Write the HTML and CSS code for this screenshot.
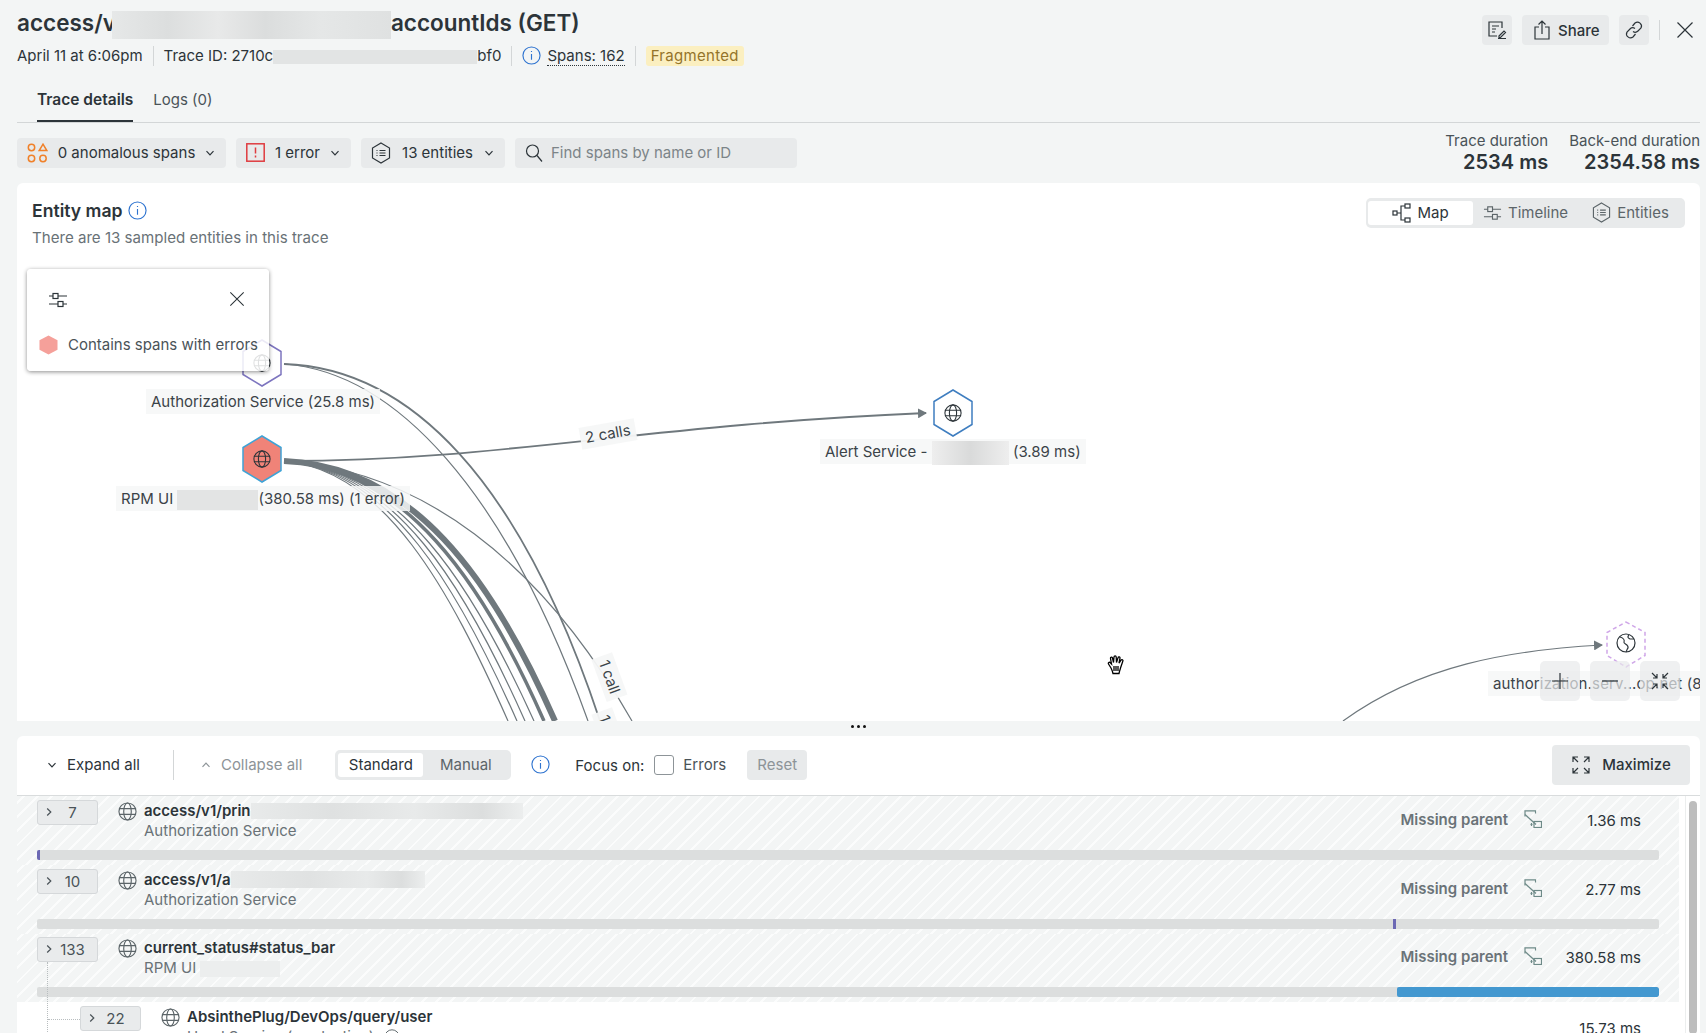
FILE: index.html
```html
<!DOCTYPE html>
<html lang="en">
<head>
<meta charset="UTF-8">
<meta name="viewport" content="width=device-width, initial-scale=1.0">
<link rel="stylesheet" href="styles.css">
<title>Trace details</title>
</head>
<body>
<svg class="defs" width="0" height="0">
  <defs>
    <symbol id="globe" viewBox="0 0 20 20"><circle cx="10" cy="10" r="9"/><ellipse cx="10" cy="10" rx="4" ry="9"/><path d="M1 7h18M1 13h18"/></symbol>
    <symbol id="chev-down" viewBox="0 0 10 10"><path d="M1.5 3.2L5 6.8l3.5-3.6"/></symbol>
    <symbol id="chev-up" viewBox="0 0 10 10"><path d="M1.5 6.8L5 3.2l3.5 3.6"/></symbol>
    <symbol id="chev-right" viewBox="0 0 10 10"><path d="M3.2 1.5L6.8 5 3.2 8.5"/></symbol>
    <symbol id="info" viewBox="0 0 20 20"><circle cx="10" cy="10" r="9"/><path d="M10 8.5v6M10 5.2v1.2"/></symbol>
    <symbol id="entities" viewBox="0 0 20 22"><path d="M10 1l8.5 5v10L10 21l-8.5-5V6z"/><path d="M8.5 8.5h6M8.5 11h6M8.5 13.5h6M5.5 8.5h1M5.5 11h1M5.5 13.5h1"/></symbol>
    <symbol id="sliders" viewBox="0 0 20 18"><path d="M1 5h4M10 5h9M1 13h9M15 13h4"/><rect x="5" y="2.5" width="5" height="5"/><rect x="10" y="10.5" width="5" height="5"/></symbol>
    <symbol id="close" viewBox="0 0 18 18"><path d="M1.5 1.5l15 15M16.5 1.5l-15 15"/></symbol>
    <symbol id="missing" viewBox="0 0 18 18"><path d="M1 6.500V.8h10.500v2.700"/><path d="M1 4.500l11 10"/><rect x="10" y="11.500" width="7.500" height="6"/><path d="M8.500 14.500H6.500M7.500 13v3"/></symbol>
  </defs>
</svg>

<div class="page">
  <header class="top">
    <div class="top-left">
      <h1 class="title">access/v<span class="smudge smudge-title"></span>accountIds (GET)</h1>
      <div class="meta">
        <span>April 11 at 6:06pm</span>
        <i class="sep"></i>
        <span class="trace-id">Trace ID: 2710c<span class="smudge smudge-id"></span>bf0</span>
        <i class="sep"></i>
        <svg class="ico ico-info"><use href="#info"/></svg>
        <span class="dotted">Spans: 162</span>
        <i class="sep"></i>
        <span class="badge">Fragmented</span>
      </div>
    </div>
    <div class="actions">
      <button class="btn square">
        <svg class="ico" width="20" height="20" viewBox="0 0 20 20"><path d="M15 8V2H2v14h8M5 6h7M5 9h4M5 12h3M11 18.500h8M12 16l5-5 1.500 1.500-5 5h-1.500z"/></svg>
      </button>
      <button class="btn share">
        <svg class="ico" width="16" height="20" viewBox="0 0 16 20"><path d="M5 7H1v12h14V7h-4M8 14V1M4.500 4.500L8 1l3.500 3.500"/></svg>
        Share
      </button>
      <button class="btn square">
        <svg class="ico" width="20" height="20" viewBox="0 0 20 20"><path d="M8.500 6l2.500-3a4 4 0 0 1 6 5l-3 3a4 4 0 0 1-5 .5M11.500 14L9 17a4 4 0 0 1-6-5l3-3a4 4 0 0 1 5-.5"/></svg>
      </button>
      <i class="sep sep-actions"></i>
      <svg class="ico ico-x"><use href="#close"/></svg>
    </div>
  </header>

  <nav class="tabs">
    <a class="tab active">Trace details</a>
    <a class="tab">Logs (0)</a>
  </nav>

  <div class="filters">
    <button class="btn filter f-anom">
      <svg class="ico-orange" width="21" height="20" viewBox="0 0 21 20"><circle cx="4.500" cy="4.500" r="3.200"/><path d="M16 1.200l3.800 6.300h-7.600z"/><circle cx="4.500" cy="15.500" r="3.200"/><circle cx="16" cy="15.500" r="3.200"/></svg>
      <span>0 anomalous spans</span>
      <svg class="chev"><use href="#chev-down"/></svg>
    </button>
    <button class="btn filter f-err">
      <svg class="ico-red" width="19" height="19" viewBox="0 0 19 19"><rect x="0.800" y="0.800" width="17.400" height="17.400"/><path d="M9.500 4.500v6M9.500 12.500v2"/></svg>
      <span>1 error</span>
      <svg class="chev"><use href="#chev-down"/></svg>
    </button>
    <button class="btn filter f-ent">
      <svg class="ico" width="20" height="22"><use href="#entities"/></svg>
      <span>13 entities</span>
      <svg class="chev"><use href="#chev-down"/></svg>
    </button>
    <div class="search">
      <svg class="ico" width="18" height="20" viewBox="0 0 18 20"><circle cx="7.500" cy="8" r="6"/><path d="M12 12.500l5 6"/></svg>
      <span>Find spans by name or ID</span>
    </div>
    <div class="stats">
      <div class="stat"><span>Trace duration</span><b>2534 ms</b></div>
      <div class="stat"><span>Back-end duration</span><b>2354.58 ms</b></div>
    </div>
  </div>

  <section class="map">
    <div class="map-head">
      <div>
        <h2 class="map-title">Entity map <svg class="ico ico-info"><use href="#info"/></svg></h2>
        <p class="map-sub">There are 13 sampled entities in this trace</p>
      </div>
      <div class="seg seg-map">
        <button class="seg-btn on">
          <svg class="ico" width="19" height="20" viewBox="0 0 19 20"><rect x="1" y="8" width="4" height="4"/><path d="M5 10h4M13 3H9v14h4"/><rect x="13" y="1" width="5" height="4"/><rect x="13" y="15" width="5" height="4"/></svg>
          Map
        </button>
        <button class="seg-btn">
          <svg class="ico" width="19" height="18"><use href="#sliders"/></svg>
          Timeline
        </button>
        <button class="seg-btn">
          <svg class="ico" width="19" height="21"><use href="#entities"/></svg>
          Entities
        </button>
      </div>
    </div>

    <svg class="edges" viewBox="17 183 1683 538" width="1683" height="538">
      <defs>
        <marker id="arrow" markerWidth="9" markerHeight="10" refX="8" refY="5" orient="auto" markerUnits="userSpaceOnUse"><path d="M0 0l9 5-9 5z" fill="#6f787d"/></marker>
      </defs>
      <g class="edge-lines">
        <path class="w2" d="M284 364C410 368 520 480 600 721"/>
        <path class="w1" d="M284 364C395 372 505 490 588 721"/>
        <path class="w2" d="M284 461C500 461 640 425 926 413" marker-end="url(#arrow)"/>
        <path class="w1" d="M284 461C420 470 540 560 632 721"/>
        <path class="w1" d="M284 461C385 470 450 590 508 721"/>
        <path class="w1" d="M284 461C390 470 458 588 517 721"/>
        <path class="w1" d="M284 461C395 470 465 586 525 721"/>
        <path class="w1" d="M284 461C400 470 472 584 534 721"/>
        <path class="w4" d="M284 461C404 468 482 580 544 721"/>
        <path class="w6" d="M284 461C412 466 492 578 555 721"/>
        <path class="w1" d="M1343 721C1420 665 1510 650 1602 645" marker-end="url(#arrow)"/>
      </g>
      <g class="node node-auth" transform="translate(262 363)">
        <path d="M0-23L19-11.500V11.500L0 23-19 11.500V-11.500z"/>
        <use href="#globe" x="-9" y="-9" width="18" height="18"/>
      </g>
      <g class="node node-err" transform="translate(262 459)">
        <path d="M0-23L19-11.500V11.500L0 23-19 11.500V-11.500z"/>
        <use href="#globe" x="-9" y="-9" width="18" height="18"/>
      </g>
      <g class="node node-alert" transform="translate(953 413)">
        <path d="M0-23L19-11.500V11.500L0 23-19 11.500V-11.500z"/>
        <use href="#globe" x="-9" y="-9" width="18" height="18"/>
      </g>
      <g class="node node-ext" transform="translate(1626 643)">
        <path d="M0-21L19-10.500V12.500L0 24-19 12.500V-10.500z"/>
        <circle r="9"/>
        <path d="M-6-6c3 1 5 2 4 5-1 2 5 2 4 6-1 1-1 2-2 4M3-8c-2 2-1 3 1 4l4 0"/>
      </g>
    </svg>

    <div class="label label-auth">Authorization Service (25.8 ms)</div>
    <div class="label label-rpm">RPM UI <span class="smudge smudge-rpm"></span>(380.58 ms) (1 error)</div>
    <div class="label label-alert">Alert Service - <span class="smudge smudge-alert"></span> (3.89 ms)</div>
    <div class="label label-ext">authorization.serv...op.net (8</div>
    <div class="edge-tag tag-two">2 calls</div>
    <div class="edge-tag tag-one">1 call</div>
    <div class="edge-tag tag-cut">1 call</div>

    <div class="legend">
      <div class="legend-top">
        <svg class="ico" width="20" height="18"><use href="#sliders"/></svg>
        <svg class="ico" width="16" height="16"><use href="#close"/></svg>
      </div>
      <div class="legend-row">
        <svg width="20" height="20" viewBox="0 0 20 20"><path class="hex-err" d="M10 0l9.500 5v10L10 20 .5 15V5z"/></svg>
        Contains spans with errors
      </div>
    </div>

    <div class="zoom-btns">
      <button class="zoom-btn"><svg class="ico" width="18" height="18" viewBox="0 0 18 18"><path d="M9 1v16M1 9h16"/></svg></button>
      <button class="zoom-btn"><svg class="ico" width="18" height="18" viewBox="0 0 18 18"><path d="M1 9h16"/></svg></button>
      <button class="zoom-btn"><svg class="ico" width="20" height="20" viewBox="0 0 20 20"><path d="M2 2l5 5M7 3v4H3M18 2l-5 5M13 3v4h4M2 18l5-5M7 17v-4H3M18 18l-5-5M13 17v-4h4"/></svg></button>
    </div>

    <svg class="hand" width="18" height="20" viewBox="0 0 18 20"><path d="M4 13L1.500 9c-.8-1.300.8-2.300 1.800-1.300L4.500 9 3.500 3.500c-.3-1.500 1.700-2 2-.5L6.500 7.500 7 2c.1-1.500 2.100-1.500 2.200 0l.3 5.500L11 2.800c.4-1.400 2.300-1 2 .4l-1 5 2-3c.9-1.200 2.500-.2 1.800 1.100L13.500 13c-.5 2-1 3-1.500 5.500H6C5.600 16.500 5 15 4 13z"/><path d="M7 11v5M9 11v5M11 11v5"/></svg>
  </section>

  <div class="splitter"><i></i><i></i><i></i></div>

  <section class="spans">
    <div class="spans-bar">
      <button class="plain"><svg class="chev"><use href="#chev-down"/></svg>Expand all</button>
      <i class="sep sep-tall"></i>
      <button class="plain dim"><svg class="chev"><use href="#chev-up"/></svg>Collapse all</button>
      <div class="seg seg-mode">
        <button class="seg-btn on">Standard</button>
        <button class="seg-btn">Manual</button>
      </div>
      <svg class="ico ico-info"><use href="#info"/></svg>
      <span class="focus">Focus on:</span>
      <span class="check"></span>
      <span class="errors">Errors</span>
      <button class="reset">Reset</button>
      <button class="maximize">
        <svg class="ico" width="20" height="20" viewBox="0 0 20 20"><path d="M2 2l5 5M2 7V2h5M18 2l-5 5M13 2h5v5M2 18l5-5M2 13v5h5M18 18l-5-5M18 13v5h-5"/></svg>
        Maximize
      </button>
    </div>

    <div class="spans-body">
      <div class="rows">
        <div class="row hatched">
          <div class="row-top">
            <span class="count"><svg class="chev"><use href="#chev-right"/></svg><span class="num">7</span></span>
            <svg class="row-globe"><use href="#globe"/></svg>
            <div class="names">
              <div class="name">access/v1/prin<span class="smudge smudge-r1"></span></div>
              <div class="svc">Authorization Service</div>
            </div>
            <span class="missing">Missing parent</span>
            <svg class="missing-ico"><use href="#missing"/></svg>
            <span class="dur">1.36 ms</span>
          </div>
          <div class="bar"><span class="fill mark"></span></div>
        </div>

        <div class="row hatched">
          <div class="row-top">
            <span class="count"><svg class="chev"><use href="#chev-right"/></svg><span class="num">10</span></span>
            <svg class="row-globe"><use href="#globe"/></svg>
            <div class="names">
              <div class="name">access/v1/a<span class="smudge smudge-r2"></span></div>
              <div class="svc">Authorization Service</div>
            </div>
            <span class="missing">Missing parent</span>
            <svg class="missing-ico"><use href="#missing"/></svg>
            <span class="dur">2.77 ms</span>
          </div>
          <div class="bar"><span class="fill mark mark-mid"></span></div>
        </div>

        <div class="row hatched tight">
          <div class="row-top">
            <span class="count"><svg class="chev"><use href="#chev-right"/></svg><span class="num">133</span></span>
            <svg class="row-globe"><use href="#globe"/></svg>
            <div class="names">
              <div class="name">current_status#status_bar</div>
              <div class="svc">RPM UI <span class="smudge smudge-r3"></span></div>
            </div>
            <span class="missing">Missing parent</span>
            <svg class="missing-ico"><use href="#missing"/></svg>
            <span class="dur">380.58 ms</span>
          </div>
          <div class="bar"><span class="fill blue"></span></div>
        </div>

        <div class="row child">
          <div class="row-top">
            <span class="count"><svg class="chev"><use href="#chev-right"/></svg><span class="num">22</span></span>
            <svg class="row-globe"><use href="#globe"/></svg>
            <div class="names">
              <div class="name">AbsinthePlug/DevOps/query/user</div>
              <div class="svc">Head Service (production) <svg class="ico ico-tiny"><use href="#info"/></svg></div>
            </div>
            <span class="dur dur-alone">15.73 ms</span>
          </div>
        </div>
      </div>
      <div class="scroll"><div class="thumb"></div></div>
    </div>
  </section>
</div>
</body>
</html>
```

FILE: styles.css
```css
* {
  box-sizing: border-box;
}
html, body {
  margin: 0;
  height: 100%;
  overflow: hidden;
}
body {
  font-family: Inter, "Noto Sans", sans-serif;
  font-size: 15px;
  color: #2c3439;
  background-color: #f3f5f5;
}
button {
  font: inherit;
  color: inherit;
  border: none;
  background: none;
  padding: 0;
}
.defs {
  position: absolute;
}
.page {
  display: flex;
  flex-direction: column;
  height: 1033px;
  padding: 0 6px 0 17px;
}

/* icons */
.ico, .chev, .row-globe, .missing-ico {
  fill: none;
  stroke: currentColor;
  stroke-width: 1.2;
  flex: none;
}
.chev {
  width: 10px;
  height: 10px;
}
.ico-info {
  width: 19px;
  height: 19px;
  color: #2f74d0;
}
.ico-x {
  width: 18px;
  height: 18px;
  color: #2c3439;
}
.ico-orange {
  fill: none;
  stroke: #f0812a;
  stroke-width: 1.5;
  flex: none;
}
.ico-red {
  fill: none;
  stroke: #df3b3f;
  stroke-width: 1.5;
  flex: none;
}
.ico-tiny {
  width: 16px;
  height: 16px;
  color: #5c6569;
  vertical-align: -3px;
  margin-left: 6px;
}

/* blurred out values */
.smudge {
  display: inline-block;
  vertical-align: middle;
  background: linear-gradient(90deg, #e6e8e8, #dcdede 20%, #e8e9e9 38%, #dbdddd 55%, #e5e7e7 75%, #dfe1e1);
}
.smudge-title { width: 279px; height: 28px; margin-left: -4px; }
.smudge-id { width: 204px; height: 14px; background: #e2e4e4; }
.smudge-rpm { width: 81px; height: 20px; background: #e3e4e4; }
.smudge-alert { width: 77px; height: 24px; background: linear-gradient(90deg, #eeeeee, #d9dada 50%, #eeeeee); }
.smudge-r1 { width: 272px; height: 16px; background: linear-gradient(90deg, #e8eaea, #dfe1e1 30%, #e8eaea 60%, #dcdede 85%, #eceeee); }
.smudge-r2 { width: 194px; height: 17px; background: linear-gradient(90deg, #e8eaea, #e0e2e2 40%, #e8eaea 70%, #dcdede 88%, #eceeee); }
.smudge-r3 { width: 80px; height: 16px; background: #eceeee; }

/* header */
.top {
  display: flex;
  justify-content: space-between;
  padding-top: 9px;
}
.title {
  margin: 0;
  font-size: 22.5px;
  line-height: 28px;
  font-weight: 600;
}
.meta {
  display: flex;
  align-items: center;
  height: 28px;
  margin-top: 3px;
}
.sep {
  display: block;
  width: 1px;
  height: 20px;
  margin: 0 10px;
  background-color: #d3d6d7;
}
.trace-id {
  white-space: nowrap;
}
.dotted {
  margin-left: 6px;
  border-bottom: 1px dotted #2c3439;
}
.badge {
  padding: 0 5px;
  line-height: 20px;
  letter-spacing: 0.3px;
  color: #94742a;
  background-color: #fbefc0;
  border-radius: 3px;
}
.actions {
  display: flex;
  align-items: center;
  gap: 10px;
  height: 30px;
  margin: 6px 6px 0 0;
}
.btn {
  display: flex;
  align-items: center;
  background-color: #e8eaeb;
  border-radius: 4px;
}
.square {
  justify-content: center;
  width: 30px;
  height: 30px;
}
.share {
  gap: 8px;
  width: 87px;
  height: 30px;
  padding-left: 12px;
  font-weight: 500;
}
.sep-actions {
  margin: 0 6px 0 0;
}

/* tabs */
.tabs {
  display: flex;
  gap: 20px;
  height: 38px;
  margin-top: 15px;
  padding-left: 20px;
  border-bottom: 1px solid #d3d6d7;
}
.tab {
  line-height: 30px;
  height: 37px;
  color: #4a5358;
}
.tab.active {
  font-size: 15.5px;
  font-weight: 600;
  color: #2c3439;
  border-bottom: 2px solid #2c3439;
}

/* filters */
.filters {
  display: flex;
  align-items: flex-start;
  gap: 10px;
  height: 45px;
  margin-top: 15px;
}
.filter {
  justify-content: space-between;
  height: 30px;
  padding: 0 11px 0 10px;
  line-height: 28px;
}
.f-anom { width: 209px; }
.f-err { width: 115px; }
.f-ent { width: 144px; }
.search {
  display: flex;
  align-items: center;
  gap: 8px;
  width: 282px;
  height: 30px;
  padding-left: 10px;
  color: #7c8488;
  background-color: #e8eaeb;
  border-radius: 4px;
}
.search .ico {
  color: #2c3439;
}
.stats {
  display: flex;
  gap: 21px;
  margin: -7px 0 0 auto;
  text-align: right;
}
.stat {
  display: flex;
  flex-direction: column;
  color: #4a5358;
  line-height: 19px;
}
.stat b {
  font-size: 20px;
  line-height: 24px;
  font-weight: 600;
  color: #2c3439;
}

/* entity map */
.map {
  position: relative;
  flex: none;
  height: 538px;
  background-color: #fff;
  border-radius: 6px 6px 0 0;
  overflow: hidden;
}
.map-head {
  position: relative;
  z-index: 2;
  display: flex;
  justify-content: space-between;
  padding: 15px 15px 0;
}
.map-title {
  display: flex;
  align-items: center;
  gap: 5px;
  margin: 0;
  font-size: 17.6px;
  line-height: 26px;
  font-weight: 600;
}
.map-sub {
  margin: 3px 0 0;
  line-height: 22px;
  font-size: 15.1px;
  color: #697277;
}
.seg {
  display: grid;
  padding: 3px;
  background-color: #e8eaeb;
  border-radius: 5px;
}
.seg-map {
  grid-template-columns: repeat(3, 105px);
  padding: 3px 2px;
  height: 30px;
}
.seg-btn {
  display: flex;
  align-items: center;
  justify-content: center;
  gap: 6px;
  color: #5c6569;
  border-radius: 3px;
}
.seg-btn.on {
  color: #2c3439;
  background-color: #fff;
}
.edges {
  position: absolute;
  left: 0;
  top: 0;
}
.edge-lines path {
  fill: none;
  stroke: #6f787d;
}
.edge-lines .w1 { stroke-width: 1.2; }
.edge-lines .w2 { stroke-width: 1.8; }
.edge-lines .w4 { stroke-width: 3.5; }
.edge-lines .w6 { stroke-width: 6; }
.node {
  fill: #fff;
  stroke-width: 1.500;
}
.node > :not(:first-child) {
  fill: none;
  stroke: #2c3439;
  stroke-width: 1.200;
}
.node-auth > path { stroke: #7d75bf; }
.node-err > path { stroke: #3fa3d6; fill: #f08378; }
.node-alert > path { stroke: #3f7ec0; }
.node-ext > path:first-child { stroke: #cfa6e8; stroke-dasharray: 4 3; }
.label {
  position: absolute;
  z-index: 1;
  height: 25px;
  padding: 0 5px;
  line-height: 25px;
  white-space: nowrap;
  color: #3b4348;
  background-color: rgba(246, 247, 247, 0.85);
}
.label-auth { left: 129px; top: 206px; }
.label-rpm { left: 99px; top: 303px; }
.label-alert { left: 803px; top: 256px; }
.label-ext { left: 1471px; top: 488px; letter-spacing: 0.15px; }
.edge-tag {
  position: absolute;
  z-index: 1;
  padding: 0 5px;
  line-height: 22px;
  color: #3b4348;
  background-color: rgba(246, 247, 247, 0.95);
}
.tag-two { left: 563px; top: 240px; transform: rotate(-10deg); }
.tag-one { left: 570px; top: 483px; transform: rotate(70deg); }
.tag-cut { left: 570px; top: 538px; transform: rotate(70deg); }
.legend {
  position: absolute;
  z-index: 2;
  left: 10px;
  top: 86px;
  width: 242px;
  height: 102px;
  padding: 22px 11px 0 12px;
  background-color: rgba(255, 255, 255, 0.85);
  border-radius: 4px;
  box-shadow: 0 1px 4px rgba(0, 0, 0, 0.45);
}
.legend-top {
  display: flex;
  justify-content: space-between;
  padding: 0 13px 0 9px;
}
.legend-row {
  display: flex;
  align-items: center;
  gap: 10px;
  margin-top: 26px;
  white-space: nowrap;
  color: #4a5358;
}
.hex-err {
  fill: #f5a09a;
}
.zoom-btns {
  position: absolute;
  z-index: 2;
  right: 20px;
  top: 478px;
  display: flex;
  gap: 10px;
}
.zoom-btn {
  display: flex;
  align-items: center;
  justify-content: center;
  width: 40px;
  height: 40px;
  border-radius: 5px;
  background-color: rgba(232, 234, 235, 0.7);
}
.hand {
  position: absolute;
  left: 1090px;
  top: 472px;
  fill: #fff;
  stroke: #000;
  stroke-width: 1.300;
}

/* splitter */
.splitter {
  display: flex;
  align-items: flex-start;
  justify-content: center;
  gap: 3px;
  flex: none;
  height: 15px;
  padding-top: 4px;
}
.splitter i {
  width: 3px;
  height: 3px;
  border-radius: 50%;
  background-color: #111;
}

/* spans table */
.spans {
  flex: 1;
  min-height: 0;
  background-color: #fff;
  border-radius: 6px 6px 0 0;
  overflow: hidden;
}
.spans-bar {
  display: flex;
  align-items: center;
  height: 60px;
  padding: 0 10px 1px 30px;
  border-bottom: 1px solid #d9dcdd;
}
.plain {
  display: flex;
  align-items: center;
  gap: 10px;
}
.dim {
  color: #8d9498;
}
.sep-tall {
  height: 30px;
  margin: 0 27px 0 33px;
}
.seg-mode {
  grid-template-columns: 85px 85px;
  height: 30px;
  margin-left: 33px;
  margin-right: 20px;
}
.focus {
  margin-left: 25px;
  margin-top: 2px;
}
.check {
  width: 20px;
  height: 20px;
  margin: 0 9px 0 10px;
  background-color: #fff;
  border: 1px solid #8d9498;
  border-radius: 3px;
}
.errors {
  color: #4a5358;
}
.reset {
  width: 60px;
  height: 30px;
  margin-left: 21px;
  color: #8d9498;
  background-color: #e8eaeb;
  border-radius: 4px;
}
.maximize {
  display: flex;
  align-items: center;
  justify-content: center;
  gap: 11px;
  width: 138px;
  height: 40px;
  margin-left: auto;
  font-weight: 500;
  background-color: #e8eaeb;
  border-radius: 4px;
}
.spans-body {
  display: flex;
  height: 238px;
}
.rows {
  width: 1663px;
}
.row {
  position: relative;
  padding: 4px 20px 0;
  height: 69px;
}
.row.tight {
  padding-top: 3px;
  height: 68px;
}
.hatched {
  background-color: #f3f5f5;
  background-image: repeating-linear-gradient(-45deg, transparent 0 8px, #fbfcfc 8px 10px);
}
.row-top {
  display: flex;
  height: 50px;
  padding-right: 18px;
}
.count {
  display: flex;
  align-items: center;
  flex: none;
  width: 61px;
  height: 25px;
  padding: 0 6px;
  color: #4a5358;
  background-color: #e9ebec;
  border: 1px solid #d5d8da;
  border-radius: 3px;
}
.num {
  flex: 1;
  text-align: center;
}
.row-globe {
  width: 19px;
  height: 19px;
  margin: 2px 7px 0 20px;
  color: #5c6569;
}
.name {
  display: flex;
  align-items: center;
  height: 20px;
  margin-top: 1px;
  font-weight: 600;
  white-space: nowrap;
}
.svc {
  line-height: 20px;
  white-space: nowrap;
  color: #697277;
}
.missing {
  height: 40px;
  line-height: 40px;
  margin-left: auto;
  font-weight: 600;
  color: #6a7378;
}
.missing-ico {
  width: 18px;
  height: 18px;
  margin: 10px 0 0 16px;
  color: #6e8a88;
}
.dur {
  width: 99px;
  height: 40px;
  line-height: 41px;
  text-align: right;
}
.dur-alone {
  margin-left: auto;
  line-height: 45px;
}
.bar {
  height: 10px;
  background-color: #dcdede;
  border-radius: 2px;
  overflow: hidden;
}
.fill {
  display: block;
  height: 100%;
}
.mark {
  width: 3px;
  background-color: #6c68b4;
}
.mark-mid {
  margin-left: 1356px;
}
.blue {
  margin-left: 1360px;
  width: 262px;
  background-color: #4398d0;
  border-radius: 2px;
}
.child {
  background-color: #fff;
  padding-left: 63px;
}
.child::before {
  content: "";
  position: absolute;
  left: 30px;
  top: -40px;
  height: 80px;
  border-left: 1px dotted #b8bdbf;
}
.child::after {
  content: "";
  position: absolute;
  left: 31px;
  top: 17px;
  width: 32px;
  border-top: 1px dotted #b8bdbf;
}
.scroll {
  flex: 1;
  margin-left: 6px;
  padding: 5px 3px 0;
  border-left: 1px solid #eceeee;
}
.thumb {
  width: 8px;
  height: 233px;
  background-color: #bdbdbd;
  border-radius: 4px;
}
```
